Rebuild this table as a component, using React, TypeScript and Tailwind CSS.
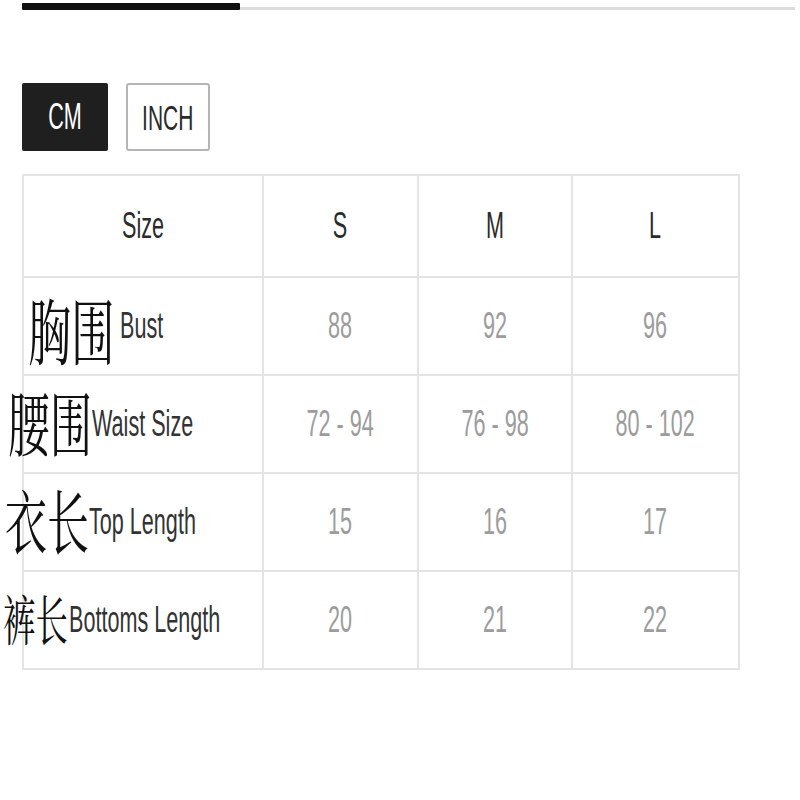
import type { ReactNode } from "react";

const SIZES = ["S", "M", "L"];

const rows = [
  {
    zh: "胸围",
    en: "Bust",
    values: ["88", "92", "96"],
    zhBox: "ml-[4px] w-[86px] text-[72px] translate-y-[5px]",
    enBox: "ml-[6px]",
  },
  {
    zh: "腰围",
    en: "Waist Size",
    values: ["72 - 94", "76 - 98", "80 - 102"],
    zhBox: "-ml-[16px] w-[84px] text-[70px]",
    enBox: "ml-0",
  },
  {
    zh: "衣长",
    en: "Top Length",
    values: ["15", "16", "17"],
    zhBox: "-ml-[19px] w-[84px] text-[70px]",
    enBox: "ml-0",
  },
  {
    zh: "裤长",
    en: "Bottoms Length",
    values: ["20", "21", "22"],
    zhBox: "-ml-[21px] w-[65px] text-[54px]",
    enBox: "ml-[1px]",
  },
];

// the screenshot is squeezed sideways, so every text run is narrowed
function Narrow({ children, className = "" }: { children: ReactNode; className?: string }) {
  return <span className={`inline-block whitespace-nowrap scale-x-[0.6] ${className}`}>{children}</span>;
}

function Cell({ children, className = "" }: { children: ReactNode; className?: string }) {
  return (
    <div className={`flex items-center border-r-2 border-b-2 border-[#e4e4e4] ${className}`}>
      {children}
    </div>
  );
}

export default function App() {
  return (
    <div className="h-[800px] w-[800px] bg-white pl-[22px] pt-[3px] font-['Liberation_Sans',Arial,sans-serif]">
      {/* Tab underline */}
      <div className="flex w-[773px] items-end">
        <div className="h-[7px] w-[218px] rounded-[1px] bg-[#111]" />
        <div className="h-[3px] flex-1 bg-[#dcdcdc]" />
      </div>

      {/* Unit switch */}
      <div className="mt-[73px] flex gap-[18px]">
        <button className="flex h-[68px] w-[86px] items-center justify-center rounded-[2px] bg-[#1f1f1f] text-[36px] leading-none text-white">
          <Narrow>CM</Narrow>
        </button>
        <button className="flex h-[68px] w-[84px] items-center justify-center rounded-[3px] border-2 border-[#b5b5b5] bg-white text-[35px] leading-none text-[#2a2a2a]">
          <Narrow>INCH</Narrow>
        </button>
      </div>

      {/* Size chart */}
      <div className="mt-[23px] grid w-[718px] grid-cols-[240px_155px_154px_167px] border-t-2 border-l-2 border-[#e4e4e4] text-[36px] leading-none">
        <Cell className="h-[102px] justify-center text-[#2b2b2b]">
          <Narrow>Size</Narrow>
        </Cell>
        {SIZES.map((s) => (
          <Cell key={s} className="h-[102px] justify-center text-[#2b2b2b]">
            <Narrow>{s}</Narrow>
          </Cell>
        ))}

        {rows.map((row) => (
          <div key={row.en} className="contents">
            <Cell className="h-[98px] justify-start text-[#333]">
              <span className={`inline-block shrink-0 leading-none text-[#111] ${row.zhBox}`}>
                <span className="inline-block origin-left scale-x-[0.6] whitespace-nowrap font-['Noto_Serif_CJK_SC','Noto_Sans_CJK_SC',serif]">
                  {row.zh}
                </span>
              </span>
              <span className={`inline-block shrink-0 ${row.enBox}`}>
                <Narrow className="origin-left">{row.en}</Narrow>
              </span>
            </Cell>
            {row.values.map((v, i) => (
              <Cell key={i} className="h-[98px] justify-center text-[#9c9c9c]">
                <Narrow>{v}</Narrow>
              </Cell>
            ))}
          </div>
        ))}
      </div>
    </div>
  );
}
